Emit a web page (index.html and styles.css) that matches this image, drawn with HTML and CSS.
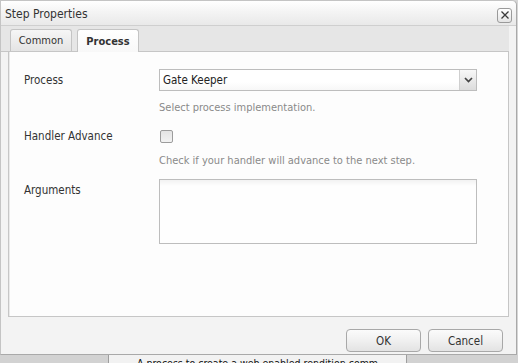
FILE: index.html
```html
<!DOCTYPE html>
<html>
<head>
<meta charset="utf-8">
<link rel="stylesheet" href="styles.css">
</head>
<body>
<div class="dialog">
  <div class="titlebar">
    <span class="title">Step Properties</span>
    <span class="close">
      <svg width="10" height="10" viewBox="0 0 10 10"><path d="M1.5 1.5 L8.5 8.5 M8.5 1.5 L1.5 8.5" stroke="#3a3a3a" stroke-width="1.3" fill="none"/></svg>
    </span>
  </div>
  <div class="tabstrip">
    <div class="tab">Common</div>
    <div class="tab active">Process</div>
  </div>
  <div class="panel">
    <div class="row">
      <div class="label">Process</div>
      <div class="field">
        <div class="select">
          <span class="select-value">Gate Keeper</span>
          <span class="select-btn">
            <svg width="9" height="6" viewBox="0 0 9 6"><path d="M1 1 L4.5 4.5 L8 1" stroke="#444" stroke-width="1.7" fill="none"/></svg>
          </span>
        </div>
        <div class="help">Select process implementation.</div>
      </div>
    </div>
    <div class="row row-check">
      <div class="label">Handler Advance</div>
      <div class="field">
        <div class="check-wrap"><span class="checkbox"></span></div>
        <div class="help help-check">Check if your handler will advance to the next step.</div>
      </div>
    </div>
    <div class="row row-args">
      <div class="label">Arguments</div>
      <div class="field">
        <div class="textarea"></div>
      </div>
    </div>
  </div>
  <div class="buttonbar">
    <button class="btn">OK</button>
    <button class="btn">Cancel</button>
  </div>
</div>
<div class="page">
  <div class="page-left"></div>
  <div class="page-mid"><span class="page-text">A process to create a web enabled rendition comm</span></div>
  <div class="page-right"></div>
</div>
</body>
</html>
```
FILE: styles.css
```css
html, body {
  margin: 0;
  padding: 0;
  background: #d6d6d6;
}
body {
  width: 518px;
  height: 363px;
  overflow: hidden;
  font-family: "DejaVu Sans Condensed", "DejaVu Sans", sans-serif;
  font-size: 11px;
  color: #333;
}
.dialog {
  width: 515px;
  height: 353px;
  border: 1px solid #a9a9a9;
  border-top-color: #c4c4c4;
  border-left-color: #c4c4c4;
  border-radius: 0 5px 0 0;
  background: #f3f3f3;
  display: flex;
  flex-direction: column;
}
.titlebar {
  height: 24px;
  flex: none;
  display: flex;
  align-items: center;
  justify-content: space-between;
  padding: 0 4px 0 4px;
  background: linear-gradient(#ffffff, #f4f4f4 45%, #e9e9e9);
  border-bottom: 1px solid #cfcfcf;
  border-radius: 0 5px 0 0;
}
.title {
  font-size: 12px;
  color: #333;
  padding-top: 2px;
}
.close {
  width: 13px;
  height: 13px;
  border: 1px solid #9a9a9a;
  border-radius: 3px;
  background: linear-gradient(#ffffff, #e4e4e4);
  display: flex;
  align-items: center;
  justify-content: center;
  margin-top: 4px;
}
.tabstrip {
  height: 25px;
  flex: none;
  background: #e6e6e6;
  display: flex;
  align-items: flex-end;
  padding-left: 9px;
  gap: 5px;
  border-bottom: 1px solid #c6c6c6;
  margin: 0 7px 0 0;
}
.tab {
  height: 21px;
  width: 60px;
  justify-content: center;
  display: flex;
  align-items: center;
  border: 1px solid #c4c4c4;
  border-bottom: none;
  border-radius: 3px 3px 0 0;
  background: linear-gradient(#f6f6f6, #e4e4e4);
  color: #333;
}
.tab.active {
  font-weight: bold;
  background: linear-gradient(#ffffff, #f8f8f8);
  height: 22px;
  margin-bottom: -1px;
}
.panel {
  flex: 1;
  margin: 0 7px 0 7px;
  border: 1px solid #c6c6c6;
  border-top: none;
  background: #fdfdfd;
  padding: 17px 0 0 15px;
  box-shadow: inset 1px 0 0 #eaeaea;
}
.row {
  display: flex;
}
.label {
  width: 135px;
  flex: none;
  line-height: 22px;
  font-size: 11.5px;
  color: #333;
}
.field {
  width: 318px;
}
.select {
  height: 20px;
  border: 1px solid #bdbdbd;
  background: linear-gradient(#ffffff, #ffffff 60%, #f7f7f7);
  display: flex;
  align-items: center;
  justify-content: space-between;
}
.select-value {
  padding-left: 3px;
  font-size: 11.5px;
  color: #222;
}
.select-btn {
  width: 16px;
  height: 20px;
  border-left: 1px solid #cfcfcf;
  background: linear-gradient(#f8f8f8, #dcdcdc);
  display: flex;
  align-items: center;
  justify-content: center;
}
.help {
  margin-top: 10px;
  line-height: 14px;
  color: #8a8a8a;
}
.row-check {
  margin-top: 10px;
}
.check-wrap {
  height: 22px;
  display: flex;
  align-items: center;
}
.checkbox {
  width: 11px;
  height: 11px;
  margin-left: 1px;
  border: 1px solid #9c9c9c;
  border-radius: 2px;
  background: linear-gradient(#e4e4e4, #f2f2f2);
}
.help-check {
  margin-top: 7px;
}
.row-args {
  margin-top: 11px;
}
.textarea {
  height: 63px;
  border: 1px solid #bdbdbd;
  background: linear-gradient(#f2f2f2, #fefefe 6px, #fefefe);
}
.buttonbar {
  flex: none;
  height: 25px;
  display: flex;
  justify-content: flex-end;
  align-items: flex-start;
  gap: 7px;
  padding: 12px 13px 0 0;
}
.btn {
  width: 75px;
  height: 23px;
  border: 1px solid #a8a8a8;
  border-radius: 4px;
  background: linear-gradient(#fbfbfb, #f0f0f0 50%, #e3e3e3);
  font-family: "DejaVu Sans Condensed", "DejaVu Sans", sans-serif;
  font-size: 11.5px;
  color: #333;
  padding: 0;
}
.page {
  display: flex;
  height: 8px;
  overflow: hidden;
}
.page-left {
  width: 108px;
  background: #d2d2d2;
  border-right: 1px solid #9e9e9e;
}
.page-mid {
  width: 297px;
  background: #f2f2f2;
  border-right: 1px solid #9e9e9e;
  position: relative;
  overflow: hidden;
}
.page-text {
  position: absolute;
  left: 28px;
  top: 2px;
  font-size: 10.5px;
  line-height: 12px;
  color: #111;
  white-space: nowrap;
}
.page-right {
  flex: 1;
  background: #d2d2d2;
}
```
